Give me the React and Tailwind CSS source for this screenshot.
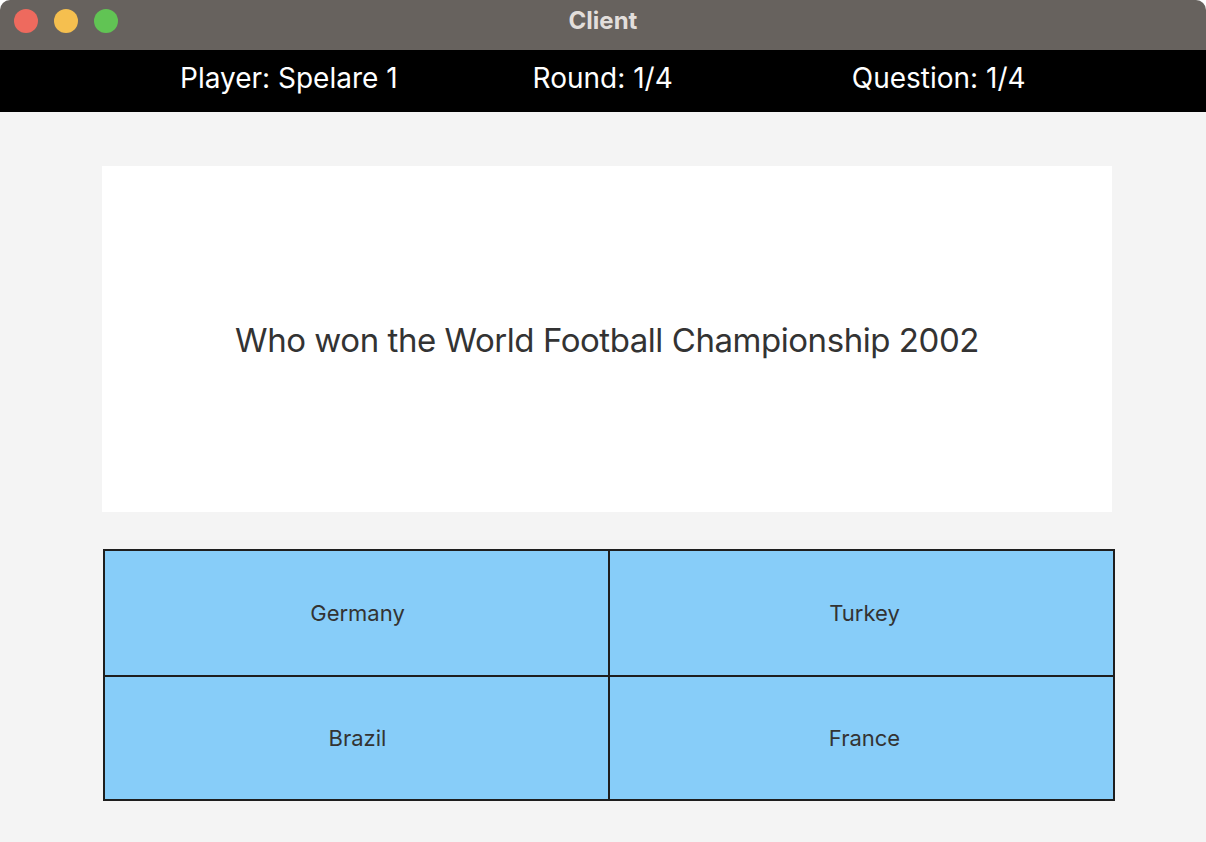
export default function App() {
  const answers = ["Germany", "Turkey", "Brazil", "France"];
  return (
    <div
      className="flex h-[842px] w-[1206px] flex-col overflow-hidden rounded-t-[10px] bg-[#f4f4f4]"
      style={{ fontFamily: "Inter, 'Noto Sans', sans-serif" }}
    >
      <div className="relative flex h-[50px] shrink-0 items-center justify-center bg-[#67625e] pb-[8px]">
        <div className="absolute left-[14px] top-[9px] flex gap-[16px]">
          <span className="h-[24px] w-[24px] rounded-full bg-[#ee6a5e]" />
          <span className="h-[24px] w-[24px] rounded-full bg-[#f5bf4f]" />
          <span className="h-[24px] w-[24px] rounded-full bg-[#61c454]" />
        </div>
        <span className="text-[24px] font-bold text-[#e2dedb]">Client</span>
      </div>

      <div className="flex h-[62px] shrink-0 items-center bg-black pb-[6px] pl-[180px] text-[28px] text-white">
        <span>Player: Spelare 1</span>
        <span className="ml-[135px]">Round: 1/4</span>
        <span className="ml-[179px]">Question: 1/4</span>
      </div>

      <div className="flex flex-col px-[102px] pt-[54px]">
        <div className="flex h-[346px] w-[1010px] items-center justify-center bg-white pt-[4px]">
          <span className="text-[33px] tracking-[-0.45px] text-[#333333]">
            Who won the World Football Championship 2002
          </span>
        </div>

        <div className="ml-px mt-[37px] grid w-[1012px] grid-cols-2 gap-[2px] border-2 border-[#1e1e1e] bg-[#1e1e1e]">
          {answers.map((a, i) => (
            <div
              key={a}
              className={
                i < 2
                  ? "flex h-[124px] items-center justify-center bg-[#87cdf9] text-[22px] text-[#333333]"
                  : "flex h-[122px] items-center justify-center bg-[#87cdf9] text-[22px] text-[#333333]"
              }
            >
              <span className={i % 2 === 0 ? "pl-[2px]" : "pl-[6px]"}>{a}</span>
            </div>
          ))}
        </div>
      </div>
    </div>
  );
}
